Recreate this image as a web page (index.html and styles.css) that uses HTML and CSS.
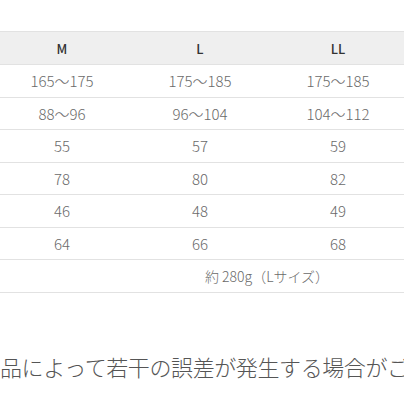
FILE: index.html
```html
<!DOCTYPE html>
<html lang="ja">
<head>
<meta charset="utf-8">
<link rel="stylesheet" href="styles.css">
</head>
<body>
<div class="page">
  <table class="size-table">
    <thead>
      <tr><th>M</th><th>L</th><th>LL</th></tr>
    </thead>
    <tbody>
      <tr><td>165〜175</td><td>175〜185</td><td>175〜185</td></tr>
      <tr><td>88〜96</td><td>96〜104</td><td>104〜112</td></tr>
      <tr><td>55</td><td>57</td><td>59</td></tr>
      <tr><td>78</td><td>80</td><td>82</td></tr>
      <tr><td>46</td><td>48</td><td>49</td></tr>
      <tr><td>64</td><td>66</td><td>68</td></tr>
      <tr><td class="weight" colspan="3">約 280g（Lサイズ）</td></tr>
    </tbody>
  </table>
  <p class="note">品によって若干の誤差が発生する場合がございます。</p>
</div>
</body>
</html>
```
FILE: styles.css
```css
html, body {
  margin: 0;
  padding: 0;
  background: #fff;
  overflow: hidden;
}
.page {
  width: 404px;
  height: 404px;
  overflow: hidden;
  padding-top: 31px;
  box-sizing: border-box;
  font-family: "Noto Sans CJK JP", "Open Sans", sans-serif;
}
.size-table {
  border-collapse: collapse;
  margin-left: -7px;
  width: 414px;
  table-layout: fixed;
  border-top: 1px solid #e2e2e2;
}
.size-table th {
  height: 32px;
  padding: 0;
  background: #efefef;
  color: #333;
  font-size: 13px;
  font-weight: 500;
  border-bottom: 1px solid #e2e2e2;
}
.size-table td {
  height: 31.5px;
  padding: 0;
  text-align: center;
  color: #6a6a6a;
  font-size: 15px;
  font-weight: 300;
  border-bottom: 1px solid #e2e2e2;
}
.size-table td.weight {
  text-align: left;
  padding-left: 212px;
  font-size: 14px;
}
.note {
  margin: 58px 0 0;
  white-space: nowrap;
  font-size: 22px;
  line-height: 30px;
  letter-spacing: -0.4px;
  font-weight: 300;
  color: #555;
}
```
